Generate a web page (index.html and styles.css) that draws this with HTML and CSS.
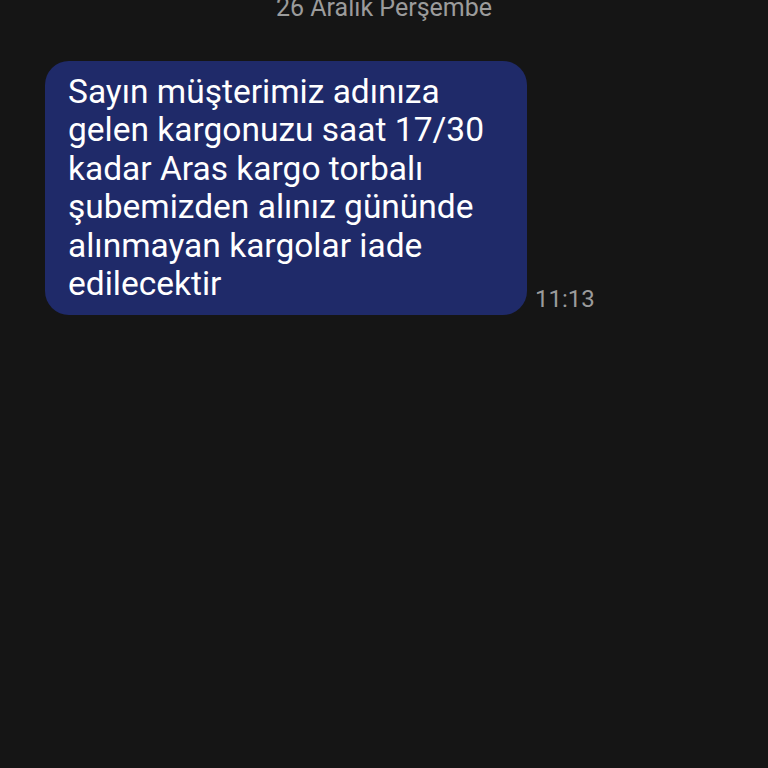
FILE: index.html
```html
<!DOCTYPE html>
<html>
<head>
    <title>Mesajlar</title>
    <link rel="stylesheet" href="styles.css">
</head>
<body>
    <div class="thread">
        <div class="date">26 Aralık Perşembe</div>
        <div class="row">
            <div class="bubble">Sayın müşterimiz adınıza gelen kargonuzu saat 17/30 kadar Aras kargo torbalı şubemizden alınız gününde alınmayan kargolar iade edilecektir</div>
            <span class="time">11:13</span>
        </div>
    </div>
</body>
</html>
```

FILE: styles.css
```css
body {
    margin: 0;
    background-color: #151515;
    font-family: Roboto, "Noto Sans", sans-serif;
    height: 768px;
    overflow: hidden;
}

.thread {
    padding-left: 45px;
}

.date {
    color: #9b9b9b;
    font-size: 25px;
    line-height: 30px;
    text-align: center;
    margin-top: -7.5px;
    margin-left: -45px;
}

.row {
    display: flex;
    align-items: flex-end;
    margin-top: 38.5px;
}

.bubble {
    background-color: #1f2a69;
    color: #ffffff;
    font-size: 33.5px;
    line-height: 38.6px;
    width: 436px;
    padding: 11.5px 23px 11px 23px;
    border-radius: 24px;
}

.time {
    color: #9b9b9b;
    font-size: 24px;
    line-height: 28px;
    margin-left: 8px;
    margin-bottom: 2px;
}
```
